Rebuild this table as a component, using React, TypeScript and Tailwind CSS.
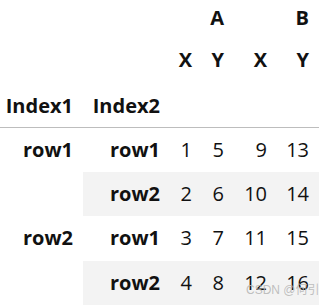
import React from "react";

const ROWS = [
  { l0: "row1", l1: "row1", vals: [1, 5, 9, 13] },
  { l0: "", l1: "row2", vals: [2, 6, 10, 14] },
  { l0: "row2", l1: "row1", vals: [3, 7, 11, 15] },
  { l0: "", l1: "row2", vals: [4, 8, 12, 16] },
];

const cell = "pr-[10px] text-right align-middle";

export default function App() {
  return (
    <div className="relative w-[327px] h-[306px] bg-white overflow-hidden text-[#111] font-['Segoe_UI','Open_Sans',sans-serif] text-[20px]">
      <table className="table-fixed border-collapse w-[319px]">
        <colgroup>
          <col className="w-[83px]" />
          <col className="w-[87px]" />
          <col className="w-[32px]" />
          <col className="w-[32px]" />
          <col className="w-[43px]" />
          <col className="w-[42px]" />
        </colgroup>
        <thead className="font-bold">
          <tr className="h-[35px]">
            <th className={cell} />
            <th className={cell} />
            <th className={cell} colSpan={2}>A</th>
            <th className={cell} colSpan={2}>B</th>
          </tr>
          <tr className="h-[50px]">
            <th className={cell} />
            <th className={cell} />
            <th className={cell}>X</th>
            <th className={cell}>Y</th>
            <th className={cell}>X</th>
            <th className={cell}>Y</th>
          </tr>
          <tr className="h-[42px] border-b border-[#bdbdbd]">
            <th className={cell}>Index1</th>
            <th className={cell}>Index2</th>
            <th className={cell} />
            <th className={cell} />
            <th className={cell} />
            <th className={cell} />
          </tr>
        </thead>
        <tbody>
          {ROWS.map((r, i) => (
            <tr key={i} className="h-[44.5px]">
              {i % 2 === 0 && (
                <th className="pr-[10px] text-right align-top font-bold" rowSpan={2}>
                  <div className="h-[44px] flex items-center justify-end">{r.l0}</div>
                </th>
              )}
              <th className={`${cell} font-bold ${i % 2 ? "bg-[#f3f3f3]" : ""}`}>
                {r.l1}
              </th>
              {r.vals.map((v, j) => (
                <td key={j} className={`${cell} ${i % 2 ? "bg-[#f3f3f3]" : ""}`}>
                  {v}
                </td>
              ))}
            </tr>
          ))}
        </tbody>
      </table>
      <div className="absolute left-[246px] top-[284px] text-[12px] leading-none text-[#b8b8b8]/90 font-['Liberation_Sans','Noto_Sans_CJK_SC',sans-serif]">
        CSDN @何引
      </div>
    </div>
  );
}
